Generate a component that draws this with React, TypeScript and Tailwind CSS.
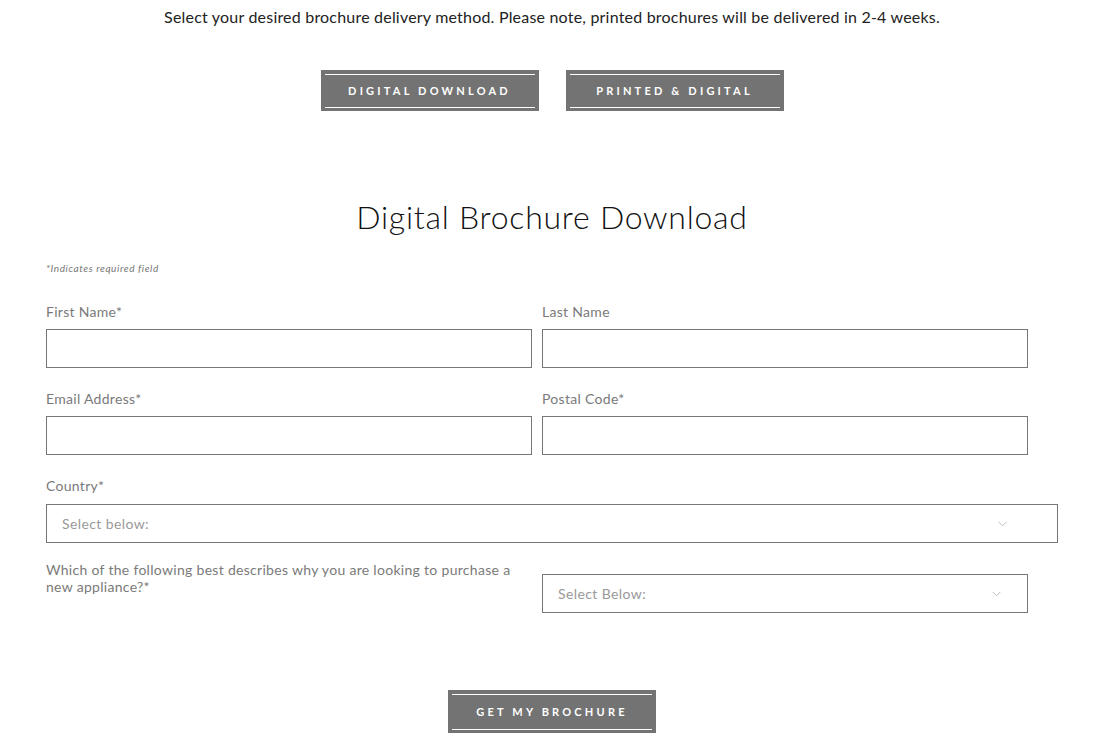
import React from "react";

function Btn({ children, w, h }: { children: React.ReactNode; w: string; h: string }) {
  return (
    <div className={`${w} ${h} bg-[#737373] px-[4px] pt-[4px] pb-[3px]`}>
      <div className="flex h-full items-center justify-center border-y border-white text-[11px] font-bold tracking-[3.2px] text-white">
        {children}
      </div>
    </div>
  );
}

function Chevron() {
  return (
    <svg width="9" height="6" viewBox="0 0 9 6" className="shrink-0">
      <path d="M0.5 0.8 L4.5 4.8 L8.5 0.8" fill="none" stroke="#bdbdbd" strokeWidth="1" />
    </svg>
  );
}

function Field({ label }: { label: string }) {
  return (
    <div className="flex flex-col">
      <label className="h-[18px] text-[14px] leading-[18px] tracking-[0.3px] text-[#7a7a7a]">{label}</label>
      <div className="mt-[8px] h-[39px] border border-[#777] bg-white" />
    </div>
  );
}

export default function App() {
  return (
    <div className="min-h-[754px] bg-white font-['Lato',sans-serif] text-[#222]">
      <div className="ml-[46px] w-[1012px]">
        <p className="pt-[8px] text-center text-[16px] leading-[18px] tracking-[0.2px] text-[#222]">
          Select your desired brochure delivery method. Please note, printed brochures will be delivered in 2-4 weeks.
        </p>
        <div className="mt-[44px] flex justify-center gap-[27px]">
          <Btn w="w-[218px]" h="h-[41px]">DIGITAL DOWNLOAD</Btn>
          <Btn w="w-[218px]" h="h-[41px]">PRINTED &amp; DIGITAL</Btn>
        </div>
        <h2 className="mt-[88px] text-center text-[32px] font-light leading-[36px] tracking-[0.75px] text-[#111]">
          Digital Brochure Download
        </h2>
        <p className="mt-[27px] text-[10px] italic leading-[12px] tracking-[0.6px] text-[#777]">*Indicates required field</p>
        <div className="mt-[29px] grid w-[982px] grid-cols-2 gap-x-[10px] gap-y-[22px]">
          <Field label="First Name*" />
          <Field label="Last Name" />
          <Field label="Email Address*" />
          <Field label="Postal Code*" />
        </div>
        <div className="mt-[22px] flex flex-col">
          <label className="h-[18px] text-[14px] leading-[18px] tracking-[0.3px] text-[#7a7a7a]">Country*</label>
          <div className="mt-[9px] flex h-[39px] items-center justify-between border border-[#777] pl-[15px] pr-[50px]">
            <span className="text-[14px] tracking-[0.4px] text-[#999]">Select below:</span>
            <Chevron />
          </div>
        </div>
        <div className="mt-[18px] grid w-[982px] grid-cols-2 gap-x-[10px]">
          <p className="pr-[10px] text-[14px] leading-[17px] tracking-[0.3px] text-[#7a7a7a]">
            Which of the following best describes why you are looking to purchase a new appliance?*
          </p>
          <div className="mt-[13px] flex h-[39px] items-center justify-between border border-[#777] pl-[15px] pr-[26px]">
            <span className="text-[14px] tracking-[0.4px] text-[#999]">Select Below:</span>
            <Chevron />
          </div>
        </div>
        <div className="mt-[77px] flex justify-center">
          <Btn w="w-[208px]" h="h-[43px]">GET MY BROCHURE</Btn>
        </div>
      </div>
    </div>
  );
}
